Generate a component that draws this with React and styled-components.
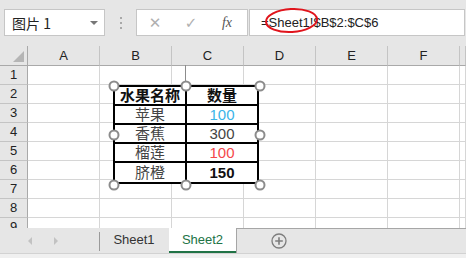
import React from 'react'
import styled, { createGlobalStyle } from 'styled-components'

const GlobalStyle = createGlobalStyle`
    body {
        margin: 0;
        background: #fff;
        overflow: hidden;
        font-family: "Liberation Sans", "Noto Sans CJK SC", sans-serif;
    }
`

const Page = styled.div`
    width: 466px;
    height: 258px;
    display: flex;
    flex-direction: column;
    background: #e6e6e6;
    position: relative;
`

const Toolbar = styled.div`
    height: 46px;
    box-sizing: border-box;
    padding: 9px 1px 0 4px;
    display: flex;
    align-items: flex-start;
`

const Box = styled.div`
    height: 27px;
    box-sizing: border-box;
    background: #fff;
    border: 1px solid #c6c6c6;
    display: flex;
    align-items: center;
`

const NameBox = styled(Box)`
    width: 101px;
    padding: 0 6px 0 7px;
    justify-content: space-between;
    font-family: "Noto Sans CJK SC", sans-serif;
    font-size: 14px;
    color: #222;
`

const Caret = styled.span`
    width: 0;
    height: 0;
    border-left: 4px solid transparent;
    border-right: 4px solid transparent;
    border-top: 4px solid #777;
`

const Grip = styled.div`
    width: 31px;
    height: 27px;
    display: flex;
    flex-direction: column;
    align-items: center;
    justify-content: center;
    gap: 3px;

    span {
        width: 2px;
        height: 2px;
        background: #a8a8a8;
    }
`

const ButtonBox = styled(Box)`
    width: 112px;
    margin-right: 1px;
    padding-left: 6px;
    gap: 12px;
`

const ToolButton = styled.span`
    color: ${p => p.$dark ? '#555' : '#b0b0b0'};
    font-family: ${p => p.$dark ? '"Liberation Serif", serif' : '"DejaVu Sans", sans-serif'};
    font-style: ${p => p.$dark ? 'italic' : 'normal'};
    font-size: ${p => p.$dark ? '14px' : '15px'};
    width: 24px;
    text-align: center;
`

const FormulaBox = styled(Box)`
    flex: 1;
    padding-left: 11px;
    font-size: 13px;
    color: #222;
`

const Sheet = styled.div`
    height: 183px;
    overflow: hidden;
    position: relative;
`

const Row = styled.div`
    display: flex;
    height: ${p => p.$head ? 20 : 19}px;
`

const Cell = styled.div`
    flex: ${p => p.$fill ? 1 : 'none'};
    width: ${p => p.$w}px;
    box-sizing: border-box;
    border-right: 1px solid ${p => p.$head ? '#c4c4c4' : '#d6d6d6'};
    border-bottom: 1px solid ${p => p.$head ? '#a9a9a9' : '#d6d6d6'};
    background: ${p => p.$head ? '#e6e6e6' : '#fff'};
    display: flex;
    align-items: center;
    justify-content: center;
    font-size: 13px;
    color: #222;
`

const RowHead = styled(Cell)`
    background: #e6e6e6;
    border-right-color: #a9a9a9;
    border-bottom-color: #c4c4c4;
`

const Corner = styled(Cell)`
    border-right-color: #a9a9a9;
    position: relative;

    &::after {
        content: '';
        position: absolute;
        right: 3px;
        bottom: 3px;
        width: 0;
        height: 0;
        border-left: 11px solid transparent;
        border-bottom: 11px solid #b5b5b5;
    }
`

const Picture = styled.div`
    position: absolute;
    left: 113px;
    top: 39px;
    width: 146px;
    height: 99px;
`

const Frame = styled.div`
    width: 100%;
    height: 100%;
    box-sizing: border-box;
    border: 2px solid #000;
    background: #fff;
    display: grid;
    grid-template-columns: 72px 1fr;
    grid-template-rows: 19px 19px 19px 19px 1fr;
`

const TCell = styled.div`
    box-sizing: border-box;
    border-right: ${p => p.$first ? '2px solid #000' : 'none'};
    border-bottom: ${p => p.$last ? 'none' : '2px solid #000'};
    display: flex;
    align-items: center;
    justify-content: center;
    font-family: "Liberation Sans", "Noto Sans CJK SC", sans-serif;
    font-size: 15px;
    font-weight: ${p => p.$bold ? 700 : 400};
    color: ${p => p.$color || '#444'};
    line-height: 1;
`

const Handle = styled.span`
    position: absolute;
    width: 11px;
    height: 11px;
    box-sizing: border-box;
    border-radius: 50%;
    border: 2px solid #8c8c8c;
    background: #fff;
    transform: translate(-50%, -50%);
`

const RotateLine = styled.span`
    position: absolute;
    left: 72px;
    top: -20px;
    width: 1px;
    height: 16px;
    background: #8c8c8c;
`

const TabBar = styled.div`
    height: 25px;
    display: flex;
`

const Nav = styled.div`
    width: 99px;
    display: flex;
    align-items: center;
    padding-left: 28px;
    gap: 22px;
    box-sizing: border-box;
`

const Arrow = styled.span`
    width: 0;
    height: 0;
    border-top: 4px solid transparent;
    border-bottom: 4px solid transparent;
    ${p => p.$right ? 'border-left: 4px solid #c2c2c2;' : 'border-right: 4px solid #c2c2c2;'}
`

const Tab = styled.div`
    width: ${p => p.$active ? 67 : 70}px;
    box-sizing: border-box;
    display: flex;
    align-items: center;
    justify-content: center;
    font-size: 13px;
    color: ${p => p.$active ? '#217346' : '#333'};
    background: ${p => p.$active ? '#fff' : 'transparent'};
    border-bottom: 2px solid ${p => p.$active ? '#217346' : 'transparent'};
    position: relative;

    ${p => !p.$active && `
        &::before {
            content: '';
            position: absolute;
            left: 0;
            top: 4px;
            bottom: 0;
            width: 1px;
            background: #9a9a9a;
        }
    `}
`

const TabRest = styled.div`
    flex: 1;
    border-top: 1px solid #a6a6a6;
    border-left: 1px solid #a6a6a6;
    display: flex;
    align-items: center;
    padding-left: 34px;
`

const Footer = styled.div`
    height: 4px;
    border-top: 1px solid #d2d2d2;
    background: #f0f0f0;
`

const columns = ['A', 'B', 'C', 'D', 'E', 'F']

const fruits = [
    { name: '苹果', qty: '100', color: '#3bb4e8' },
    { name: '香蕉', qty: '300' },
    { name: '榴莲', qty: '100', color: '#f5474a' },
    { name: '脐橙', qty: '150', color: '#111', bold: true },
]

const handles = [
    [0, 0], [72, 0], [146, 0],
    [0, 49], [146, 49],
    [0, 99], [72, 99], [146, 99],
]

const Ellipse = () => (
    <svg width="466" height="258" style={{ position: 'absolute', left: 0, top: 0, pointerEvents: 'none' }}>
        <ellipse cx="291.5" cy="20.5" rx="25.5" ry="11.5" fill="none" stroke="#e0141c" strokeWidth="2" transform="rotate(-3 291.5 20.5)" />
    </svg>
)

const PlusIcon = () => (
    <svg width="16" height="16" viewBox="0 0 16 16">
        <circle cx="8" cy="8" r="7" fill="none" stroke="#7d7d7d" strokeWidth="1.3" />
        <path d="M8 4.2v7.6M4.2 8h7.6" stroke="#7d7d7d" strokeWidth="1.6" />
    </svg>
)

const App = () => {
    const rows = [1, 2, 3, 4, 5, 6, 7, 8, 9]

    return (
        <Page>
            <GlobalStyle />
            <Toolbar>
                <NameBox>
                    <span>图片 1</span>
                    <Caret />
                </NameBox>
                <Grip><span /><span /><span /></Grip>
                <ButtonBox>
                    <ToolButton>✕</ToolButton>
                    <ToolButton>✓</ToolButton>
                    <ToolButton $dark>fx</ToolButton>
                </ButtonBox>
                <FormulaBox>=Sheet1!$B$2:$C$6</FormulaBox>
            </Toolbar>

            <Sheet>
                <Row $head>
                    <Corner $w={28} $head />
                    {columns.map(c => <Cell key={c} $w={72} $head>{c}</Cell>)}
                    <Cell $fill $head />
                </Row>
                {rows.map(r => (
                    <Row key={r}>
                        <RowHead $w={28}>{r}</RowHead>
                        {columns.map(c => <Cell key={c} $w={72} />)}
                        <Cell $fill />
                    </Row>
                ))}

                <Picture>
                    <RotateLine />
                    <Frame>
                        <TCell $first $bold $color="#111">水果名称</TCell>
                        <TCell $bold $color="#111">数量</TCell>
                        {fruits.map((f, i) => (
                            <React.Fragment key={f.name}>
                                <TCell $first $last={i === fruits.length - 1}>{f.name}</TCell>
                                <TCell $last={i === fruits.length - 1} $color={f.color} $bold={f.bold}>{f.qty}</TCell>
                            </React.Fragment>
                        ))}
                    </Frame>
                    {handles.map(([x, y]) => (
                        <Handle key={`${x}-${y}`} style={{ left: x + 1, top: y + 1 }} />
                    ))}
                </Picture>
            </Sheet>

            <TabBar>
                <Nav>
                    <Arrow />
                    <Arrow $right />
                </Nav>
                <Tab>Sheet1</Tab>
                <Tab $active>Sheet2</Tab>
                <TabRest>
                    <PlusIcon />
                </TabRest>
            </TabBar>
            <Footer />
            <Ellipse />
        </Page>
    )
}

export default App
